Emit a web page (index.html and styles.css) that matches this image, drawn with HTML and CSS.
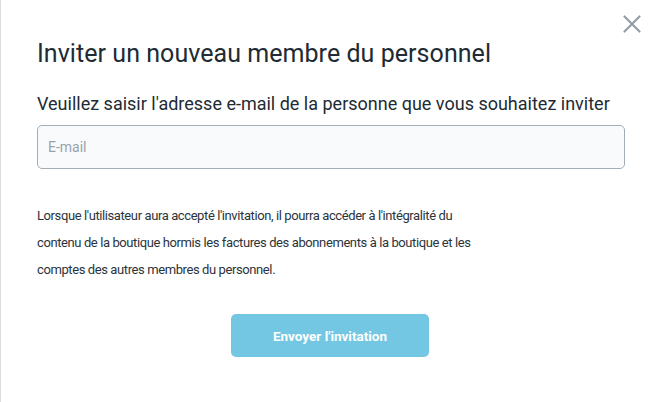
FILE: index.html
```html
<!DOCTYPE html>
<html lang="fr">
<head>
<meta charset="utf-8">
<link rel="stylesheet" href="styles.css">
</head>
<body>
<div class="modal">
  <button class="close" aria-label="Fermer">
    <svg width="18" height="18" viewBox="0 0 18 18"><path d="M1.5 1.5 L16.5 16.5 M16.5 1.5 L1.5 16.5" stroke="#939ea7" stroke-width="2.2" stroke-linecap="round"/></svg>
  </button>
  <h1 class="title">Inviter un nouveau membre du personnel</h1>
  <h2 class="subtitle">Veuillez saisir l'adresse e-mail de la personne que vous souhaitez inviter</h2>
  <input class="email" type="text" placeholder="E-mail">
  <p class="info">Lorsque l'utilisateur aura accepté l'invitation, il pourra accéder à l'intégralité du contenu de la boutique hormis les factures des abonnements à la boutique et les comptes des autres membres du personnel.</p>
  <div class="actions"><button class="send">Envoyer l'invitation</button></div>
</div>
</body>
</html>
```
FILE: styles.css
```css
html, body { margin: 0; padding: 0; background: #fff; }
body { font-family: Roboto, "Noto Sans", sans-serif; color: #212b33; }
.modal {
  position: relative;
  box-sizing: border-box;
  width: 658px; height: 402px;
  border-left: 1px solid #d9dde0;
  padding: 39px 35px 0 36px;
}
.close {
  position: absolute; top: 15px; right: 17px;
  background: none; border: 0; padding: 0; width: 18px; height: 18px; cursor: pointer;
}
.close svg { display: block; }
.title { margin: 0; font-size: 25px; font-weight: 400; line-height: 30px; letter-spacing: 0.05px; }
.subtitle { margin: 23px 0 0; font-size: 18px; font-weight: 400; line-height: 24px; }
.email {
  display: block; box-sizing: border-box; width: 588px; height: 44px; margin-top: 9px;
  border: 1px solid #a3adb6; border-radius: 5px; background: #f8fafb;
  padding: 0 10px; font-family: inherit; font-size: 14px; color: #212b33; outline: none;
}
.email::placeholder { color: #9aa3ab; }
.info { margin: 33px 0 0; font-size: 13px; letter-spacing: -0.4px; line-height: 27px; color: #2b343b; max-width: 440px; }
.actions { display: flex; justify-content: center; margin-top: 31px; }
.send {
  width: 198px; height: 43px; border: 0; border-radius: 5px;
  background: #74c7e2; color: #fff; font-family: inherit; font-weight: 700; font-size: 13.5px;
}
```
